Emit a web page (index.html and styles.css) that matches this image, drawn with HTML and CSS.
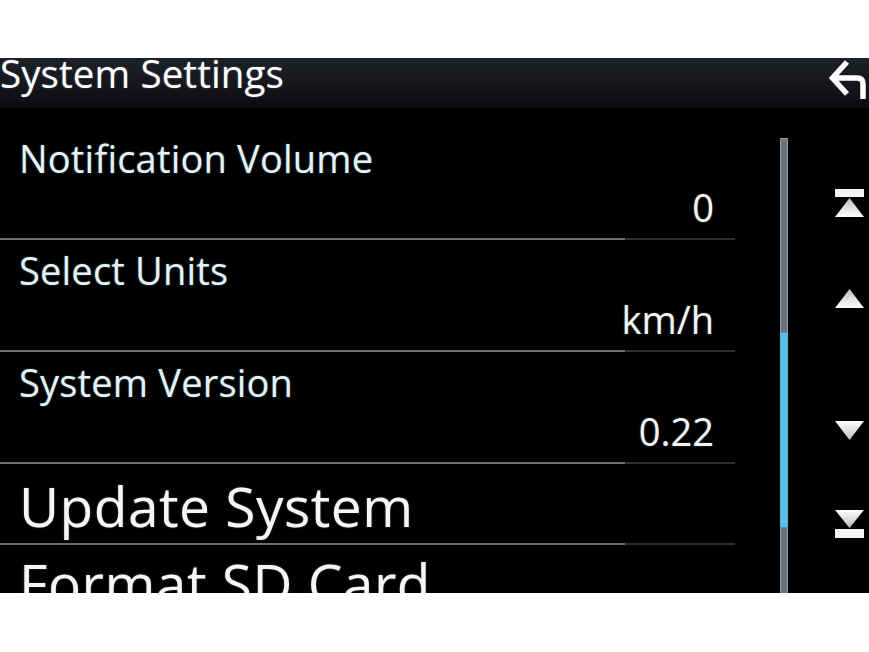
FILE: index.html
```html
<!DOCTYPE html>
<html>
<head>
<meta charset="utf-8">
<link rel="stylesheet" href="styles.css">
</head>
<body>
<div class="screen">
  <div class="header">
    <div class="title">System Settings</div>
    <svg class="back" width="43" height="50" viewBox="826 58 43 50">
      <path d="M847 62 L832.5 78 L847 94 M833 78 L857 78 Q863 78 863 84 L863 99" fill="none" stroke="#ffffff" stroke-width="5.5" stroke-linejoin="miter" stroke-linecap="butt"/>
    </svg>
  </div>
  <div class="body">
    <div class="list">
      <div class="row two first">
        <div class="label">Notification Volume</div>
        <div class="value">0</div>
      </div>
      <div class="divider"></div>
      <div class="row two">
        <div class="label">Select Units</div>
        <div class="value">km/h</div>
      </div>
      <div class="divider"></div>
      <div class="row two">
        <div class="label">System Version</div>
        <div class="value">0.22</div>
      </div>
      <div class="divider"></div>
      <div class="row one">
        <div class="big">Update System</div>
      </div>
      <div class="divider"></div>
      <div class="row one last">
        <div class="big">Format SD Card</div>
      </div>
    </div>
    <div class="scroll">
      <div class="track"><div class="thumb"></div></div>
    </div>
    <div class="nav">
      <svg class="ico top" width="29" height="29" viewBox="0 0 29 29">
        <defs>
          <linearGradient id="g1" x1="0" y1="0" x2="0" y2="1">
            <stop offset="0" stop-color="#bdbdbd"/>
            <stop offset="1" stop-color="#ffffff"/>
          </linearGradient>
        </defs>
        <rect x="0" y="0" width="29" height="8" fill="#f4f4f4"/>
        <polygon points="14.5,9 29,28 0,28" fill="url(#g1)"/>
      </svg>
      <svg class="ico up" width="29" height="19" viewBox="0 0 29 19">
        <defs>
          <linearGradient id="g2" x1="0" y1="0" x2="0" y2="1">
            <stop offset="0" stop-color="#bdbdbd"/>
            <stop offset="1" stop-color="#ffffff"/>
          </linearGradient>
        </defs>
        <polygon points="14.5,0 29,19 0,19" fill="url(#g2)"/>
      </svg>
      <svg class="ico down" width="29" height="19" viewBox="0 0 29 19">
        <defs>
          <linearGradient id="g3" x1="0" y1="0" x2="0" y2="1">
            <stop offset="0" stop-color="#ffffff"/>
            <stop offset="1" stop-color="#bdbdbd"/>
          </linearGradient>
        </defs>
        <polygon points="0,0 29,0 14.5,19" fill="url(#g3)"/>
      </svg>
      <svg class="ico bottom" width="29" height="28" viewBox="0 0 29 28">
        <defs>
          <linearGradient id="g4" x1="0" y1="0" x2="0" y2="1">
            <stop offset="0" stop-color="#ffffff"/>
            <stop offset="1" stop-color="#bdbdbd"/>
          </linearGradient>
        </defs>
        <polygon points="0,0 29,0 14.5,18" fill="url(#g4)"/>
        <rect x="0" y="19" width="29" height="9" fill="#f4f4f4"/>
      </svg>
    </div>
  </div>
</div>
</body>
</html>
```
FILE: styles.css
```css
html, body {
  margin: 0;
  padding: 0;
  background: #ffffff;
}
body {
  width: 869px;
  height: 652px;
  overflow: hidden;
  font-family: "Open Sans", "DejaVu Sans", sans-serif;
}
.screen {
  margin-top: 58px;
  width: 869px;
  height: 535px;
  background: #000000;
  overflow: hidden;
  display: flex;
  flex-direction: column;
}
.header {
  height: 50px;
  flex: 0 0 50px;
  display: flex;
  justify-content: space-between;
  align-items: flex-start;
  background: linear-gradient(to bottom, #1d2027 0%, #15171c 50%, #0a0b0e 100%);
}
.title {
  color: #ffffff;
  font-size: 38.5px;
  line-height: 30px;
  padding-left: 0;
  letter-spacing: 0.1px;
  text-shadow: 0 0 2px rgba(200, 230, 255, 0.35);
}
.back {
  display: block;
}
.body {
  flex: 1 1 auto;
  display: flex;
  flex-direction: row;
  align-items: stretch;
}
.list {
  width: 735px;
  flex: 0 0 735px;
  padding-top: 20px;
}
.row {
  padding-left: 19px;
  padding-right: 21px;
  color: #eef7f9;
}
.row.two {
  padding-top: 8px;
  padding-bottom: 9px;
}
.row.one {
  padding-top: 12px;
  padding-bottom: 7px;
}
.row.one.last {
  padding-top: 8px;
}
.label {
  font-size: 38px;
  line-height: 44px;
  letter-spacing: 0.2px;
  color: #e4f2f6;
  text-shadow: 0 0 2px rgba(150, 215, 245, 0.45);
}
.value {
  margin-top: 5px;
  font-size: 38px;
  line-height: 44px;
  text-align: right;
  color: #f4f4f4;
  text-shadow: 0 0 2px rgba(200, 230, 255, 0.35);
}
.big {
  font-size: 55px;
  line-height: 60px;
  color: #f6f6f6;
  letter-spacing: 0.5px;
  text-shadow: 0 0 2px rgba(200, 230, 255, 0.35);
}
.divider {
  height: 2px;
  background: linear-gradient(to right, #6e6e6e 0, #6e6e6e 625px, #2e2e2e 625px, #2e2e2e 735px);
}
.scroll {
  margin-left: 45px;
  width: 8px;
  flex: 0 0 8px;
  padding-top: 30px;
  display: flex;
  flex-direction: column;
}
.track {
  flex: 1 1 auto;
  box-sizing: border-box;
  background: #6c737f;
  border: 1px solid #8f96a2;
  display: flex;
  flex-direction: column;
}
.thumb {
  margin-top: 194px;
  height: 194px;
  background: #52c6f0;
  box-shadow: 0 0 2px #4fd0ff;
}
.nav {
  margin-left: 47px;
  width: 29px;
  display: flex;
  flex-direction: column;
  padding-top: 81px;
}
.ico {
  display: block;
}
.up {
  margin-top: 71px;
}
.down {
  margin-top: 113px;
}
.bottom {
  margin-top: 70px;
}
```
